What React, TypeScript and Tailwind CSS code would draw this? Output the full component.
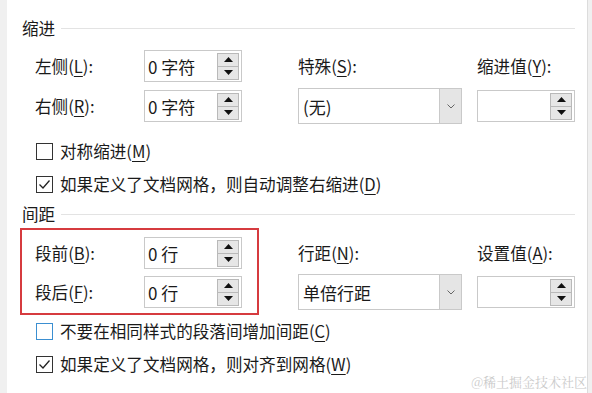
import type { ReactNode } from "react";

// 段落对话框（缩进和间距）片段
function U({ children }: { children: ReactNode }) {
  return <span className="underline decoration-1 underline-offset-[3px]">{children}</span>;
}

function Tri({ up }: { up?: boolean }) {
  return (
    <svg width="9" height="5" viewBox="0 0 9 5">
      <polygon points={up ? "0,5 9,5 4.5,0" : "0,0 9,0 4.5,5"} fill="#111" />
    </svg>
  );
}

function Spin({ value }: { value?: string }) {
  return (
    <div className="flex h-[32px] w-[98px] items-center border border-[#c9c9c9] bg-white pl-[3px] pr-[2px]">
      <span className="flex-1 text-[17px] leading-none text-[#1a1a1a]">{value}</span>
      <div className="flex h-[27px] w-[22px] flex-col border border-[#b9b9b9] bg-[#e6e6e6]">
        <div className="flex flex-1 items-center justify-center border-b border-[#b9b9b9]">
          <Tri up />
        </div>
        <div className="flex flex-1 items-center justify-center">
          <Tri />
        </div>
      </div>
    </div>
  );
}

function Select({ value }: { value: string }) {
  return (
    <div className="flex h-[36px] w-[164px] shrink-0 items-stretch border border-[#c9c9c9] bg-white">
      <span className="flex flex-1 items-center pl-[4px] text-[17px] text-[#1a1a1a]">{value}</span>
      <div className="flex w-[22px] items-center justify-center border-l border-[#c9c9c9] bg-[#e5e5e5]">
        <svg width="8" height="5" viewBox="0 0 8 5">
          <polyline points="0.5,0.5 4,4 7.5,0.5" fill="none" stroke="#666" strokeWidth="1" />
        </svg>
      </div>
    </div>
  );
}

function Check({ checked, focus, children }: { checked?: boolean; focus?: boolean; children: ReactNode }) {
  return (
    <div className="ml-[29px] flex h-[24px] items-center gap-[7px]">
      <div
        className={`flex h-[17px] w-[17px] items-center justify-center border bg-white ${
          focus ? "border-[#3b8fd1]" : "border-[#333]"
        }`}
      >
        {checked && (
          <svg width="13" height="11" viewBox="0 0 13 11">
            <polyline points="1.5,5.5 5,9 11.5,1.5" fill="none" stroke="#222" strokeWidth="1.3" />
          </svg>
        )}
      </div>
      <span className="text-[16.6px] text-[#1a1a1a]">{children}</span>
    </div>
  );
}

function Header({ title }: { title: string }) {
  return (
    <div className="flex h-[20px] items-center pl-[15px] pr-[12px]">
      <span className="text-[16.6px] text-[#1a1a1a]">{title}</span>
      <div className="ml-[6px] h-px flex-1 bg-[#e3e3e3]" />
    </div>
  );
}

function Row({ children }: { children: ReactNode }) {
  return <div className="flex h-[32px] items-center">{children}</div>;
}

function Label({ children }: { children: ReactNode }) {
  return <span className="w-[109px] shrink-0 text-[16.6px] text-[#1a1a1a]">{children}</span>;
}

export default function App() {
  return (
    <div className="relative flex h-[393px] w-[592px] overflow-hidden bg-[#f0f0f0] font-['Noto_Sans_CJK_SC',sans-serif] leading-none">
      <div className="w-[7px] shrink-0 bg-[#f0f0f0]" />

      <div className="flex w-[580px] shrink-0 flex-col bg-white pt-[18px]">
        {/* 缩进 */}
        <Header title="缩进" />
        <div className="ml-[28px] mt-[12px] flex flex-col gap-[8px]">
          <Row>
            <Label>
              左侧(<U>L</U>):
            </Label>
            <Spin value="0 字符" />
            <span className="ml-[56px] w-[164px] text-[16.6px] text-[#1a1a1a]">
              特殊(<U>S</U>):
            </span>
            <span className="ml-[15px] text-[16.6px] text-[#1a1a1a]">
              缩进值(<U>Y</U>):
            </span>
          </Row>
          <Row>
            <Label>
              右侧(<U>R</U>):
            </Label>
            <Spin value="0 字符" />
            <div className="ml-[56px]">
              <Select value="(无)" />
            </div>
            <div className="ml-[15px]">
              <Spin />
            </div>
          </Row>
        </div>

        <div className="mt-[17px]">
          <Check>
            对称缩进(<U>M</U>)
          </Check>
        </div>
        <div className="mt-[9px]">
          <Check checked>
            如果定义了文档网格，则自动调整右缩进(<U>D</U>)
          </Check>
        </div>

        {/* 间距 */}
        <div className="mt-[8px]">
          <Header title="间距" />
        </div>
        <div className="mt-[4px] flex items-start">
          <div className="ml-[13px] flex w-[239px] flex-col gap-[7px] border-2 border-[#d63b3f] pb-[5px] pl-[13px] pt-[7px]">
            <Row>
              <Label>
                段前(<U>B</U>):
              </Label>
              <Spin value="0 行" />
            </Row>
            <Row>
              <Label>
                段后(<U>F</U>):
              </Label>
              <Spin value="0 行" />
            </Row>
          </div>
          <div className="ml-[39px] flex flex-col gap-[7px] pt-[9px]">
            <Row>
              <span className="w-[164px] text-[16.6px] text-[#1a1a1a]">
                行距(<U>N</U>):
              </span>
              <span className="ml-[15px] text-[16.6px] text-[#1a1a1a]">
                设置值(<U>A</U>):
              </span>
            </Row>
            <Row>
              <Select value="单倍行距" />
              <div className="ml-[15px]">
                <Spin />
              </div>
            </Row>
          </div>
        </div>

        <div className="mt-[4px]">
          <Check focus>
            不要在相同样式的段落间增加间距(<U>C</U>)
          </Check>
        </div>
        <div className="mt-[9px]">
          <Check checked>
            如果定义了文档网格，则对齐到网格(<U>W</U>)
          </Check>
        </div>
      </div>

      <div className="w-px shrink-0 bg-[#dcdcdc]" />
      <div className="flex-1 bg-[#f0f0f0]" />

      <span className="absolute bottom-[5px] right-[5px] font-['Noto_Serif_CJK_SC','Noto_Sans_CJK_SC',serif] text-[13px] text-[#cacaca]">
        @稀土掘金技术社区
      </span>
    </div>
  );
}
